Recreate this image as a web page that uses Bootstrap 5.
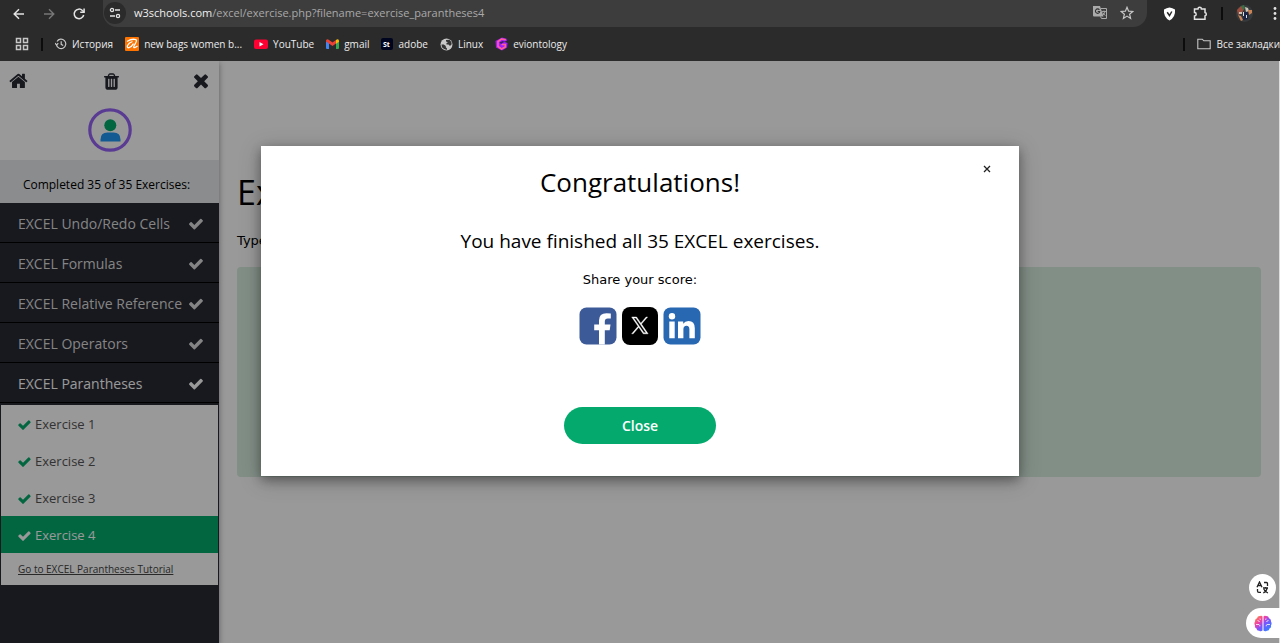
<!DOCTYPE html>
<html lang="en">
<head>
<meta charset="utf-8">
<meta name="viewport" content="width=device-width, initial-scale=1">
<title>EXCEL Exercises</title>
<link href="https://cdn.jsdelivr.net/npm/bootstrap@5.3.0/dist/css/bootstrap.min.css" rel="stylesheet">
<style>
  body { font-family: "Open Sans", "Noto Sans", sans-serif; color: #000; }
  svg { display: block; flex: none; }
  button { font-family: inherit; }
  .chrome { background: #2b2b2b; color: #e3e3e3; height: 61px; }
  .toolbar { height: 27px; }
  .plain-btn { border: 0; background: none; padding: 0; color: inherit; display: flex; align-items: center; }
  .nav-btns { width: 103px; padding-left: 11px; gap: 14px; }
  .omnibox { background: #3d3d3d; border-radius: 0 0 14px 14px; padding: 0 13px 1px 1px; }
  .site-info { width: 22px; height: 22px; border-radius: 50%; background: #2b2b2b; justify-content: center; }
  .address { border: 0; background: none; padding: 0; color: #a9a9a9; font-size: 11px; line-height: 20px; white-space: nowrap; }
  .address b { color: #f0f0f0; font-weight: 400; }
  .tools { gap: 13px; padding-left: 16px; }
  .bookmarks { height: 34px; padding-left: 15px; font-size: 10px; }
  .bookmarks a { color: #ececec; text-decoration: none; display: flex; align-items: center; gap: 5px; white-space: nowrap; }
  .divider { width: 2px; height: 13px; background: #0c0c0c; flex: none; }
  .links { gap: 12px; padding-left: 12px; }
  .side { width: 219px; flex: none; background: #282a35; box-shadow: 0 2px 6px rgba(0,0,0,.4); z-index: 1; }
  .side-top { background: #fff; height: 99px; color: #282a35; }
  .side-icons { padding: 10px 11px 0 9px; }
  .avatar { margin-top: 16px; }
  .done { background: #e7e9eb; height: 43px; font-size: 12px; padding: 6px 6px 0 0; }
  .topic { height: 40px; border-bottom: 1px solid #000; padding: 2px 16px 0 18px; font-size: 14px; color: #ddd; text-decoration: none; white-space: nowrap; }
  .topic.open { color: #fff; }
  .steps { background: #fff; border: 1px solid #282a35; border-width: 2px 1px 0; }
  .step { height: 37px; padding: 2px 0 0 17px; gap: 4px; font-size: 13px; color: #555; text-decoration: none; }
  .step svg { color: #04aa6d; }
  .step.current { background: #04aa6d; color: #fff; }
  .step.current svg { color: #fff; }
  .tutorial { height: 32px; padding-left: 17px; font-size: 10px; color: #444; }
  .lesson { padding: 105px 19px 0 18px; }
  .lesson h1 { font-size: 34px; line-height: 52px; margin: 0; }
  .verdana { font-family: "DejaVu Sans", sans-serif; }
  .task { font-size: 13px; line-height: 20px; margin: 13px 0 16px; }
  .answer { background: #d9eee1; height: 210px; border-radius: 4px; }
  .shade { background: rgba(0,0,0,.4); padding: 85px 7px 0 8px; z-index: 5; border-right: 1px solid #ddd; }
  .dialog-box { width: 60%; height: 330px; background: #fff; box-shadow: 0 4px 10px rgba(0,0,0,.3), 0 4px 20px rgba(0,0,0,.25); }
  .dialog-box h2 { font-size: 26px; line-height: 38px; margin: 17px 0 25px; }
  .finished { font-size: 19px; line-height: 30px; margin: 0 0 14px; }
  .share { font-size: 13px; line-height: 20px; margin: 0 0 17px; }
  .dismiss { top: 16px; right: 26px; width: 12px; height: 14px; justify-content: center; }
  .close-btn { width: 152px; height: 37px; border: 0; border-radius: 19px; background: #04aa6d; color: #fff; font-size: 14px; font-weight: 600; margin-top: 62px; }
  .floaters { right: 0; bottom: 5px; z-index: 6; gap: 7px; }
  .float-round { width: 27px; height: 27px; border-radius: 50%; background: #fff; justify-content: center; margin-right: 4px; }
  .float-pill { width: 34px; height: 30px; border-radius: 15px 0 0 15px; background: #fff; padding-left: 8px; }
</style>
</head>
<body class="vh-100 d-flex flex-column overflow-hidden">
<svg width="0" height="0" class="position-absolute" aria-hidden="true">
  <symbol id="check" viewBox="120 290 1560 1250"><path fill="currentColor" d="M1671 566q0 40-28 68l-724 724-136 136q-28 28-68 28t-68-28l-136-136-362-362q-28-28-28-68t28-68l136-136q28-28 68-28t68 28l294 295 656-657q28-28 68-28t68 28l136 136q28 28 28 68z"/></symbol>
</svg>

<header class="chrome flex-shrink-0 overflow-hidden">
  <div class="toolbar d-flex">
    <div class="nav-btns d-flex align-items-center">
      <button class="plain-btn" aria-label="Back"><svg width="16" height="16" viewBox="0 0 16 16" fill="none" stroke="#e3e3e3" stroke-width="1.5"><path d="M13 8H3.500M8 3.200 3.200 8 8 12.800"/></svg></button>
      <button class="plain-btn" aria-label="Forward"><svg width="16" height="16" viewBox="0 0 16 16" fill="none" stroke="#777" stroke-width="1.400"><path d="M3 8h9.500M8 3.200 12.800 8 8 12.800"/></svg></button>
      <button class="plain-btn" aria-label="Reload"><svg width="16" height="16" viewBox="0 0 16 16" fill="none" stroke="#e3e3e3" stroke-width="1.500"><path d="M12.700 9A4.800 4.800 0 1 1 11.400 4.500L13 6"/><path d="M13.100 2.500V6.300H9.200"/></svg></button>
    </div>
    <div class="omnibox d-flex align-items-center flex-grow-1">
      <button class="plain-btn site-info" aria-label="Site information"><svg width="12" height="12" viewBox="0 0 12 12" fill="none" stroke="#e3e3e3" stroke-width="1.300"><circle cx="3" cy="3" r="1.600"/><path d="M6 3h5M1 9h5"/><circle cx="9" cy="9" r="1.600"/></svg></button>
      <div class="address ms-2 flex-grow-1" role="textbox" aria-label="Address"><b>w3schools.com</b>/excel/exercise.php?filename=exercise_parantheses4</div>
      <button class="plain-btn me-2" aria-label="Translate"><svg width="16" height="16" viewBox="0 0 16 16"><path fill="#aaa" d="M1 1h7l3.500 10.500H2a1 1 0 0 1-1-1z"/><path d="M9 3.500h5.500v10H9.500l-1-2" fill="none" stroke="#aaa"/><path d="M10 6.500h4M12 5.500v1M13 6.500q-.5 2.500-2.500 4M10.800 7.500q1 2 2.700 3" fill="none" stroke="#aaa" stroke-width=".9"/><path d="M7.400 4.800A2.200 2.200 0 1 0 7.800 6.500H5.700" fill="none" stroke="#333" stroke-width="1.100"/></svg></button>
      <button class="plain-btn ms-1" aria-label="Bookmark"><svg width="14" height="14" viewBox="0 0 14 14"><path d="m7 1.300 1.600 3.900 4.200.3L9.600 8.200l1 4.200L7 10.100l-3.600 2.300 1-4.200L1.200 5.500l4.200-.3z" fill="none" stroke="#c7c7c7" stroke-width="1.200"/></svg></button>
    </div>
    <div class="tools d-flex align-items-center">
      <button class="plain-btn" aria-label="Protection"><svg width="13" height="14" viewBox="0 0 13 14"><path fill="#fff" d="M6.500.5Q9.500 1 12 2.500q.8 7.500-5.500 11Q.2 10 1 2.500 3.500 1 6.500.5z"/><path d="M4.200 5.200 6.500 8.500l2.300-4" fill="none" stroke="#2b2b2b" stroke-width="1.500"/></svg></button>
      <button class="plain-btn ms-1" aria-label="Extensions"><svg width="15" height="15" viewBox="0 0 15 15"><path d="M1.500 3H5a1.700 1.700 0 0 1 3.400 0H12v3.600a1.700 1.700 0 0 1 0 3.300v3.400H1.500V10a1.700 1.700 0 0 0 0-3.400z" fill="none" stroke="#e3e3e3" stroke-width="1.500"/></svg></button>
      <span class="divider"></span>
      <button class="plain-btn" aria-label="Profile"><svg width="17" height="17" viewBox="0 0 17 17"><circle cx="8.500" cy="8.500" r="8.500" fill="#373a3c"/><path fill="#9a4d3d" d="M1 5l4-4 3 3-2 4-4 2z"/><path fill="#c9c4b5" d="M9 2l3 1 1 3-3 1zM3 7h3v2H3z"/><path fill="#3e7048" d="M5 1l3-1 1 3-2 2z"/><path fill="#1b2445" d="M8 7h5l-1 7-5 1z"/><path fill="#c98355" d="M12 5h4v3l-3 2zM2 10l3 1 2 4-2 1z"/><path fill="#d9dde0" d="M7 7h1v4H7zM10 10h1v3h-1z"/></svg></button>
      <button class="plain-btn" aria-label="Menu"><svg width="14" height="15" viewBox="0 0 14 15" fill="#e3e3e3"><circle cx="9" cy="2.500" r="1.400"/><circle cx="9" cy="7.500" r="1.400"/><circle cx="9" cy="12.500" r="1.400"/></svg></button>
    </div>
  </div>
  <nav class="bookmarks d-flex align-items-center" aria-label="Bookmarks">
    <button class="plain-btn me-2" aria-label="Apps"><svg width="14" height="14" viewBox="0 0 14 14" fill="none" stroke="#c7c7c7" stroke-width="1.500"><path d="M1.500 1.500h4v4h-4zM8.500 1.500h4v4h-4zM1.500 8.500h4v4h-4zM8.500 8.500h4v4h-4z"/></svg></button>
    <span class="divider ms-1"></span>
    <div class="links d-flex flex-grow-1">
      <a href="#"><svg width="12" height="12" viewBox="0 0 12 12" fill="none" stroke="#c7c7c7" stroke-width="1.200"><path d="M1.500 7A4.700 4.700 0 1 0 2 3.500M0 5l1.500 2L3.300 5.300M6.200 3.200v3.100l2 1.200"/></svg>История</a>
      <a href="#"><svg width="14" height="14" viewBox="0 0 14 14"><rect width="14" height="14" rx="1" fill="#ff7300"/><path d="M2 4.500q4-2.500 7.500-2.200 3 .2 1.500 3L9 9q-1 2 1 1.500l2.500-1.300M7.500 4.500Q4 5.500 2.500 8.500q-.8 2.500 1.500 2.200 2.500-.7 4.500-4" fill="none" stroke="#fff" stroke-width="1.300"/></svg>new bags women b...</a>
      <a href="#"><svg width="14" height="14" viewBox="0 0 14 14"><rect y="2.500" width="14" height="9.500" rx="2" fill="#ff0033"/><path fill="#fff" d="m5.500 5 4 2.200-4 2.200z"/></svg>YouTube</a>
      <a href="#"><svg width="13" height="12" viewBox="0 0 13 12"><path fill="#4285f4" d="M0 3l3 2v6H1a1 1 0 0 1-1-1z"/><path fill="#34a853" d="M13 3l-3 2v6h2a1 1 0 0 0 1-1z"/><path fill="#ea4335" d="M0 2.500Q1 .5 3 2l3.500 2.600L10 2v3.500L6.500 8 0 3.500z"/><path fill="#fbbc04" d="M10 2q2-1.500 3 .5v1.200l-3 2z"/></svg>gmail</a>
      <a href="#"><svg width="12" height="12" viewBox="0 0 12 12"><rect width="12" height="12" rx="2" fill="#00051f"/><text x="2" y="8.500" font-size="7" font-weight="700" fill="#fff">St</text></svg>adobe</a>
      <a href="#"><svg width="13" height="13" viewBox="0 0 13 13"><circle cx="6.500" cy="6.500" r="6" fill="#c7c7c7"/><path fill="#333" d="M1.500 6.500h2.300l2 1.500v1.300L7 10.500v1.200H6.300Q1.500 11 1.500 6.500zM6 2l3.500-.2q2.200 1.800 2.200 4.500L10 8 8.500 6.500h-2V5l1.500-.8L6 3.500z"/></svg>Linux</a>
      <a href="#"><svg width="13" height="14" viewBox="0 0 13 14"><path fill="#a21cff" d="M7 .5l4.500 1.200.5 2-3 1L12.500 6 12 10.500l-5 3L1 10.500.5 4z"/><path d="M10.800 2.800 6.500 2 3 4.500v5L6.500 12l3.800-2V7.500H6.500" fill="none" stroke="#ff5f96" stroke-width="1.600"/><path fill="#3b1f63" d="M4.500 5.500 7.500 4l2 .8L6 7z"/></svg>eviontology</a>
    </div>
    <span class="divider me-2"></span>
    <a href="#" class="ms-1"><svg width="14" height="12" viewBox="0 0 14 12"><path d="M.8 1.200h4.500l1.500 1.600h6.400v7.900H.8z" fill="none" stroke="#c7c7c7" stroke-width="1.100"/></svg>Все закладки</a>
  </nav>
</header>

<div class="position-relative d-flex flex-grow-1 overflow-hidden">
  <aside class="side">
    <div class="side-top">
      <div class="side-icons d-flex justify-content-between">
        <button class="plain-btn" aria-label="Home"><svg width="19" height="21" viewBox="50 220 1700 1450" fill="currentColor"><path d="M1472 992v480q0 26-19 45t-45 19h-384v-384h-256v384h-384q-26 0-45-19t-19-45v-480q0-1 .5-3t.5-3l575-474 575 474q1 2 1 6zm223-69l-62 74q-8 9-21 11h-3q-13 0-21-7l-692-577-692 577q-12 8-24 7-13-2-21-11l-62-74q-8-10-7-23.500t11-21.500l719-599q32-26 76-26t76 26l244 204v-195q0-14 9-23t23-9h192q14 0 23 9t9 23v408l219 182q10 8 11 21.500t-7 23.500z"/></svg></button>
        <button class="plain-btn" aria-label="Reset"><svg width="19" height="21" viewBox="0 0 1792 1792" fill="currentColor"><path d="M704 1376v-704q0-14-9-23t-23-9h-64q-14 0-23 9t-9 23v704q0 14 9 23t23 9h64q14 0 23-9t9-23zm256 0v-704q0-14-9-23t-23-9h-64q-14 0-23 9t-9 23v704q0 14 9 23t23 9h64q14 0 23-9t9-23zm256 0v-704q0-14-9-23t-23-9h-64q-14 0-23 9t-9 23v704q0 14 9 23t23 9h64q14 0 23-9t9-23zm-544-992h448l-48-117q-7-9-17-11h-317q-10 2-17 11zm928 32v64q0 14-9 23t-23 9h-96v948q0 83-47 143.500t-113 60.500h-832q-66 0-113-58.500t-47-141.500v-952h-96q-14 0-23-9t-9-23v-64q0-14 9-23t23-9h309l70-167q15-37 54-63t79-26h320q40 0 79 26t54 63l70 167h309q14 0 23 9t9 23z"/></svg></button>
        <button class="plain-btn" aria-label="Close menu"><svg width="14" height="21" viewBox="300 280 1190 1390" fill="currentColor"><path d="M1490 1322q0 40-28 68l-136 136q-28 28-68 28t-68-28l-294-294-294 294q-28 28-68 28t-68-28l-136-136q-28-28-28-68t28-68l294-294-294-294q-28-28-28-68t28-68l136-136q28-28 68-28t68 28l294 294 294-294q28-28 68-28t68 28l136 136q28 28 28 68t-28 68l-294 294 294 294q28 28 28 68z"/></svg></button>
      </div>
      <a href="#" class="avatar d-flex justify-content-center" aria-label="Profile"><svg width="44" height="44" viewBox="0 0 44 44"><circle cx="22" cy="22" r="20.200" fill="none" stroke="#9763f6" stroke-width="3.200"/><circle cx="22.300" cy="17.300" r="6" fill="#04aa6d"/><path fill="#2196f3" d="M12.500 33.500v-2q0-7 7-7h6q7 0 7 7v2z"/></svg></a>
    </div>
    <div class="done d-flex align-items-center justify-content-center">Completed 35 of 35 Exercises:</div>
    <nav aria-label="Exercises">
      <a href="#" class="topic d-flex align-items-center justify-content-between">EXCEL Undo/Redo Cells<svg width="14" height="12"><use href="#check"/></svg></a>
      <a href="#" class="topic d-flex align-items-center justify-content-between">EXCEL Formulas<svg width="14" height="12"><use href="#check"/></svg></a>
      <a href="#" class="topic d-flex align-items-center justify-content-between">EXCEL Relative Reference<svg width="14" height="12"><use href="#check"/></svg></a>
      <a href="#" class="topic d-flex align-items-center justify-content-between">EXCEL Operators<svg width="14" height="12"><use href="#check"/></svg></a>
      <a href="#" class="topic open d-flex align-items-center justify-content-between">EXCEL Parantheses<svg width="14" height="12"><use href="#check"/></svg></a>
      <div class="steps">
        <a href="#" class="step d-flex align-items-center"><svg width="13" height="10"><use href="#check"/></svg>Exercise 1</a>
        <a href="#" class="step d-flex align-items-center"><svg width="13" height="10"><use href="#check"/></svg>Exercise 2</a>
        <a href="#" class="step d-flex align-items-center"><svg width="13" height="10"><use href="#check"/></svg>Exercise 3</a>
        <a href="#" class="step current d-flex align-items-center"><svg width="13" height="10"><use href="#check"/></svg>Exercise 4</a>
        <a href="#" class="tutorial d-flex align-items-center">Go to EXCEL Parantheses Tutorial</a>
      </div>
    </nav>
  </aside>
  <main class="lesson flex-grow-1">
    <h1>Exercise:</h1>
    <p class="task verdana">Type</p>
    <div class="answer"></div>
  </main>

  <div class="shade position-absolute top-0 start-0 w-100 h-100 d-flex justify-content-center align-items-start">
    <section class="dialog-box position-relative d-flex flex-column align-items-center" role="dialog" aria-labelledby="done-title">
      <button class="plain-btn dismiss position-absolute" aria-label="Dismiss"><svg width="8" height="8" viewBox="0 0 8 8"><path d="m1 1 6 6M7 1 1 7" stroke="#222" stroke-width="1.300"/></svg></button>
      <h2 id="done-title">Congratulations!</h2>
      <p class="finished">You have finished all 35 EXCEL exercises.</p>
      <p class="share verdana">Share your score:</p>
      <div class="d-flex gap-1">
        <a href="#" aria-label="Share on Facebook"><svg width="38" height="38" viewBox="0 0 38 38"><rect x=".5" y=".5" width="37" height="37" rx="7" fill="#3d5a98"/><path fill="#fff" d="M20 37.500V23.200h-4.800v-5.600H20v-4.100q0-7.300 7.500-7.300 2.300 0 4.300.3v5h-3q-3 0-3 3v3.100h5.700l-.8 5.600h-4.900v14.300z"/></svg></a>
        <a href="#" aria-label="Share on X"><svg width="38" height="38" viewBox="0 0 38 38"><rect x="1" y="0" width="36" height="38" rx="8" fill="#000"/><path transform="translate(10.500 10) scale(.7)" fill="#fff" stroke="#fff" stroke-width=".6" d="M14.234 10.162 22.977 0h-2.072l-7.591 8.824L7.251 0H.258l9.168 13.343L.258 24H2.330l8.016-9.318L16.749 24h6.993zm-2.837 3.299-.929-1.329L3.076 1.560h3.182l5.965 8.532.929 1.329 7.754 11.090h-3.182z"/></svg></a>
        <a href="#" aria-label="Share on LinkedIn"><svg width="38" height="38" viewBox="0 0 38 38"><rect x=".5" y=".5" width="37" height="37" rx="7" fill="#2867b2"/><path fill="#fff" d="M6.300 14.500h5.400v16.800H6.300zM15 14.500h5.200v2.300q1.700-2.700 5.300-2.700 6.300 0 6.300 7.200v10h-5.400v-9q0-3.600-2.900-3.600-3.100 0-3.100 3.600v9H15z"/><circle cx="9" cy="9.200" r="3.200" fill="#fff"/></svg></a>
      </div>
      <button class="close-btn">Close</button>
    </section>
  </div>

  <div class="floaters position-absolute d-flex flex-column align-items-end">
    <button class="plain-btn float-round" aria-label="Translate page"><svg width="13" height="13" viewBox="0 0 13 13" fill="none" stroke="#222" stroke-width="1.300"><path d="M1 6.300 3.500 1 6 6.300M2 4.500h3M8 1.500h2.500q1 0 1 1V5M1.500 8v2q0 1.300 1.300 1.300H5M7 7h5M9.500 6v1M11.300 7q-.8 3.500-4 5M7.700 8q1.500 3 4.300 4"/></svg></button>
    <button class="plain-btn float-pill" aria-label="Assistant"><svg width="18" height="17" viewBox="0 0 18 17"><defs><linearGradient id="brain" x1="0" y1="0" x2="1" y2="1"><stop offset="0" stop-color="#ff9a2e"/><stop offset=".35" stop-color="#f03ea8"/><stop offset=".55" stop-color="#7a55ff"/><stop offset="1" stop-color="#1f8fff"/></linearGradient></defs><path fill="url(#brain)" d="M8.500 1.500v14q-1.500 1.500-3.300.3Q2.800 16 2.500 13.500.5 12.500 1 10.300-.2 8.500 1 6.500.8 4 3 3.300 3.500.8 6 1q1.600-.9 2.500.5zM9.500 1.500v14q1.500 1.500 3.300.3 2.400.2 2.700-2.300 2-1 1.500-3.200 1.200-1.800 0-3.800.2-2.500-2-3.200Q14.500.8 12 1q-1.600-.9-2.500.5z"/><path d="M3.500 5.500q1.500 0 2 1.500M2 9.500h3q1 .5.800 1.800M6 3.500l.3 1.300M14.500 5.500q-1.500 0-2 1.500M16 9.500h-3q-1 .5-.8 1.800M12 3.500l-.3 1.300" fill="none" stroke="#fff" stroke-width=".8"/></svg></button>
  </div>
</div>
<script src="https://cdn.jsdelivr.net/npm/bootstrap@5.3.0/dist/js/bootstrap.bundle.min.js"></script>
</body>
</html>
